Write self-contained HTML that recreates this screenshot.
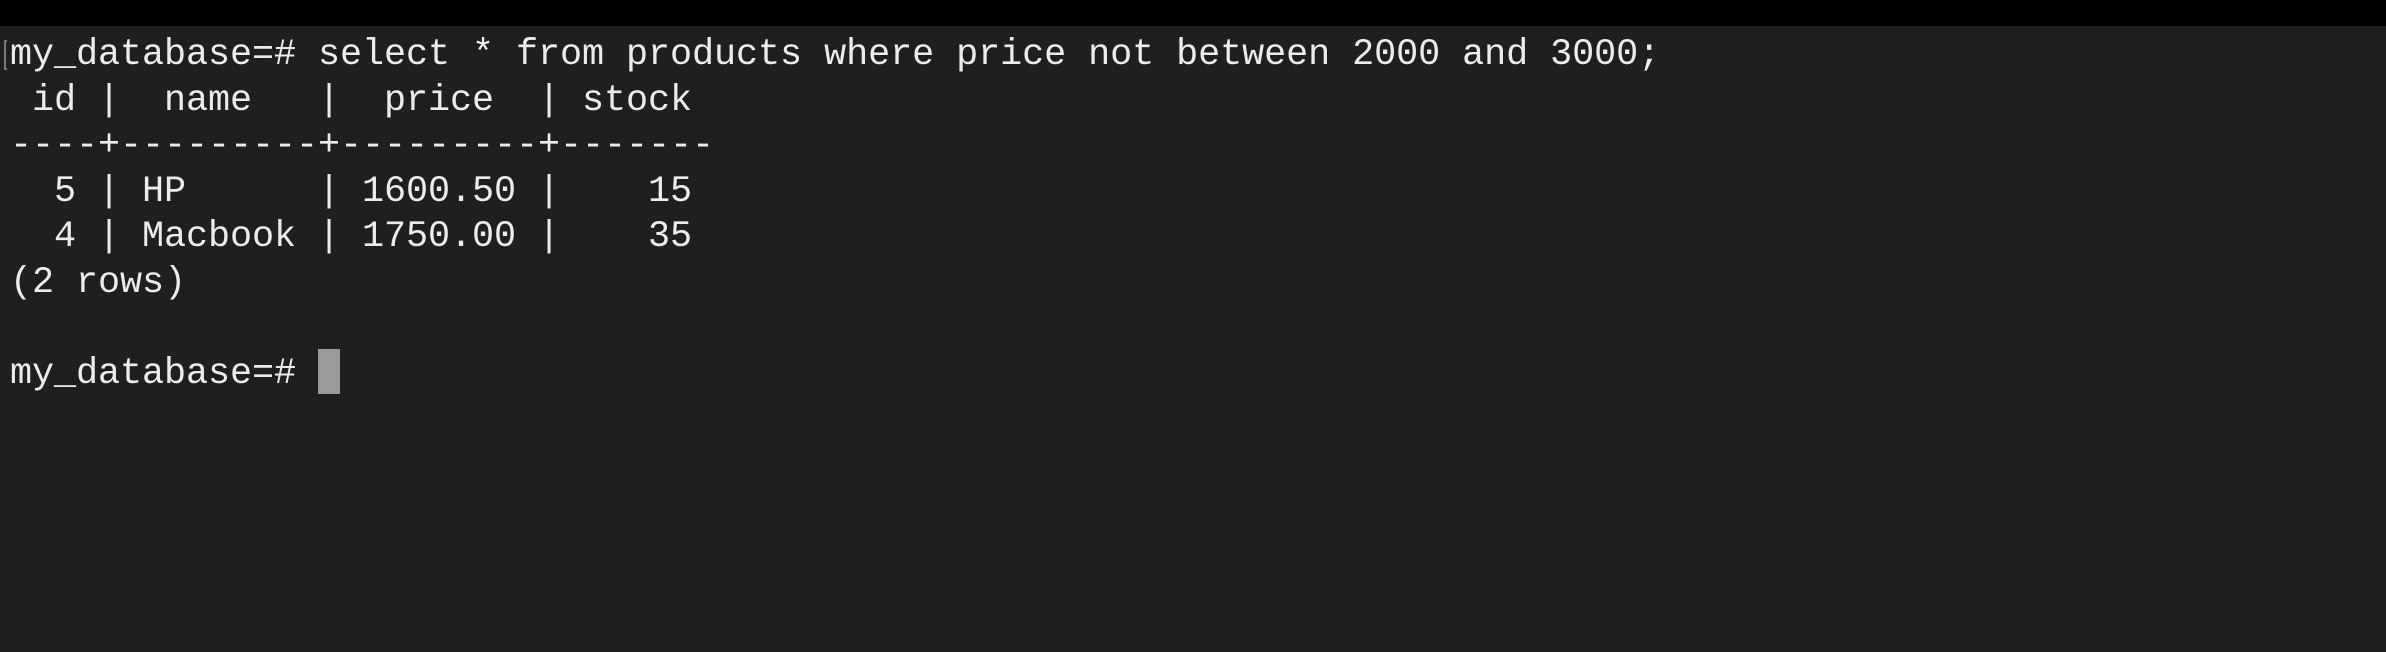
<!DOCTYPE html>
<html><head><meta charset="utf-8"><style>
html,body{margin:0;padding:0;}
body{width:2386px;height:652px;background:#1f1f1f;overflow:hidden;position:relative;}
.bar{position:absolute;left:0;top:0;width:2386px;height:26px;background:#000;}
pre{position:absolute;left:10px;top:33px;margin:0;font-family:"Liberation Mono",monospace;font-size:36.8px;letter-spacing:-0.08px;line-height:45.6px;color:#ececec;white-space:pre;}
.br{position:absolute;left:4px;top:40px;width:3px;height:30px;border:2px solid #777;border-right:none;box-sizing:border-box;}
.cur{position:absolute;left:318px;top:349px;width:22px;height:45px;background:#9a9a9a;}
</style></head><body>
<div class="bar"></div>
<div class="br"></div>
<pre>my_database=# select * from products where price not between 2000 and 3000;
 id |  name   |  price  | stock
----+---------+---------+-------
  5 | HP      | 1600.50 |    15
  4 | Macbook | 1750.00 |    35
(2 rows)

my_database=# </pre>
<div class="cur"></div>
</body></html>
